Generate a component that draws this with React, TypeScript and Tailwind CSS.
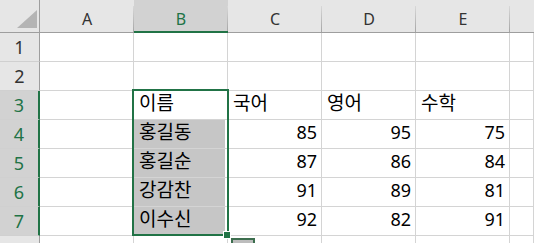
const cols = ['A', 'B', 'C', 'D', 'E', ''];

type Row = { n: number; cells: (string | number | null)[] };

const rows: Row[] = [
  { n: 1, cells: [null, null, null, null, null, null] },
  { n: 2, cells: [null, null, null, null, null, null] },
  { n: 3, cells: [null, '이름', '국어', '영어', '수학', null] },
  { n: 4, cells: [null, '홍길동', 85, 95, 75, null] },
  { n: 5, cells: [null, '홍길순', 87, 86, 84, null] },
  { n: 6, cells: [null, '강감찬', 91, 89, 81, null] },
  { n: 7, cells: [null, '이수신', 92, 82, 91, null] },
  { n: 8, cells: [null, null, null, null, null, null] },
];

const selRows = [3, 4, 5, 6, 7];

function ColHeader({ label, last }: { label: string; last: boolean }) {
  const active = label === 'B';
  return (
    <div
      className={`relative flex h-full items-center justify-center pt-[6px] text-[16px] ${
        last ? 'flex-1' : 'w-[94px]'
      } ${
        active
          ? 'border-b-2 border-[#217346] bg-[#d2d2d2] text-[#217346]'
          : 'border-b border-[#9e9e9e] bg-[#e6e6e6] text-[#333]'
      }`}
    >
      {label}
      {!last && (
        <span className="absolute top-[6px] right-0 bottom-0 w-px bg-gradient-to-b from-[#d8d8d8] to-[#a6a6a6]" />
      )}
    </div>
  );
}

function Cell({ value, col, row }: { value: string | number | null; col: number; row: number }) {
  const last = col === 5;
  const filled = col === 1 && row >= 4 && row <= 7;
  const isNum = typeof value === 'number';
  return (
    <div className={`flex h-full border-r border-b border-[#d4d4d4] ${last ? 'flex-1' : 'w-[94px]'}`}>
      <div
        className={`flex h-full flex-1 items-end pb-[5px] leading-[22px] text-black ${
          isNum ? 'justify-end pr-[4px] text-[18px]' : 'justify-start pl-[5px] text-[19px]'
        } ${filled ? 'mr-[2px] bg-[#c6c6c6]' : ''}`}
      >
        {value}
      </div>
    </div>
  );
}

export default function App() {
  return (
    <div
      className="relative h-[243px] w-[534px] overflow-hidden bg-white"
      style={{ fontFamily: '"Noto Sans", "Noto Sans CJK KR", sans-serif' }}
    >
      <div className="flex h-[33px]">
        <div className="relative h-full w-[40px] border-r border-b border-[#9e9e9e] bg-[#e6e6e6]">
          <svg className="absolute top-[10px] left-[17px]" width="20" height="18" viewBox="0 0 20 18">
            <polygon points="0,18 20,0 20,18" fill="#b4b4b4" />
          </svg>
        </div>
        {cols.map((c, i) => (
          <ColHeader key={i} label={c} last={i === cols.length - 1} />
        ))}
      </div>

      {rows.map((r) => {
        const sel = selRows.includes(r.n);
        return (
          <div key={r.n} className="flex h-[29px]">
            <div
              className={`flex h-full w-[40px] items-center justify-center border-b border-[#d0d0d0] pt-[1px] text-[18px] ${
                sel
                  ? 'border-r-2 border-r-[#217346] bg-[#d2d2d2] text-[#217346]'
                  : 'border-r border-r-[#9e9e9e] bg-[#e6e6e6] text-[#333]'
              }`}
            >
              {r.n < 8 ? r.n : ''}
            </div>
            {r.cells.map((v, i) => (
              <Cell key={i} value={v} col={i} row={r.n} />
            ))}
          </div>
        );
      })}

      {/* selection border */}
      <div className="absolute top-[89px] left-[132px] h-[147px] w-[97px] border-2 border-[#217346]" />
      {/* fill handle */}
      <div className="absolute top-[231px] left-[223px] h-[8px] w-[8px] border border-white bg-[#217346]" />
      {/* quick analysis button */}
      <div className="absolute top-[238px] left-[231px] h-[12px] w-[24px] border-2 border-[#3c6e4e] bg-[#bdbdbd]" />
    </div>
  );
}
